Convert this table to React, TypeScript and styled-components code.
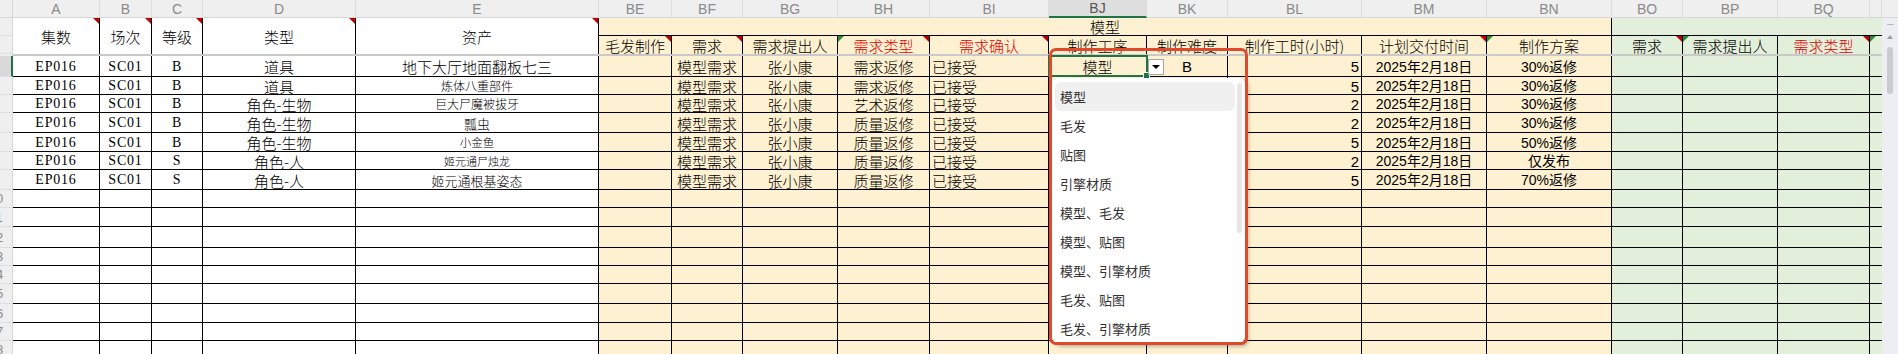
import React from 'react'
import styled, { createGlobalStyle, css } from 'styled-components'

type Zone = 'white' | 'gold' | 'green'
type Align = 'center' | 'left' | 'right'
type Face = 'cjk' | 'code' | 'sans'
type Mark = 'red' | 'green' | 'both' | undefined

interface Col {
  key: string
  width: number
  zone: Zone
  align: Align
  face: Face
}

const COLS: Col[] = [
  { key: 'A', width: 87, zone: 'white', align: 'center', face: 'code' },
  { key: 'B', width: 52, zone: 'white', align: 'center', face: 'code' },
  { key: 'C', width: 51, zone: 'white', align: 'center', face: 'code' },
  { key: 'D', width: 153, zone: 'white', align: 'center', face: 'cjk' },
  { key: 'E', width: 243, zone: 'white', align: 'center', face: 'cjk' },
  { key: 'BE', width: 73, zone: 'gold', align: 'center', face: 'cjk' },
  { key: 'BF', width: 71, zone: 'gold', align: 'center', face: 'cjk' },
  { key: 'BG', width: 95, zone: 'gold', align: 'center', face: 'cjk' },
  { key: 'BH', width: 92, zone: 'gold', align: 'center', face: 'cjk' },
  { key: 'BI', width: 119, zone: 'gold', align: 'left', face: 'cjk' },
  { key: 'BJ', width: 98, zone: 'gold', align: 'center', face: 'cjk' },
  { key: 'BK', width: 81, zone: 'gold', align: 'center', face: 'sans' },
  { key: 'BL', width: 134, zone: 'gold', align: 'right', face: 'sans' },
  { key: 'BM', width: 125, zone: 'gold', align: 'center', face: 'sans' },
  { key: 'BN', width: 125, zone: 'gold', align: 'center', face: 'sans' },
  { key: 'BO', width: 71, zone: 'green', align: 'center', face: 'cjk' },
  { key: 'BP', width: 95, zone: 'green', align: 'center', face: 'cjk' },
  { key: 'BQ', width: 92, zone: 'green', align: 'center', face: 'cjk' },
  { key: '', width: 12, zone: 'green', align: 'center', face: 'cjk' },
]

// header texts of row 2 for the gold + green block (BE .. BR)
const SUB_HEADERS: { text: string; red?: boolean; mark?: Mark }[] = [
  { text: '毛发制作', mark: 'red' },
  { text: '需求', mark: 'red' },
  { text: '需求提出人' },
  { text: '需求类型', red: true, mark: 'both' },
  { text: '需求确认', red: true, mark: 'red' },
  { text: '制作工序' },
  { text: '制作难度' },
  { text: '制作工时(小时)' },
  { text: '计划交付时间', mark: 'red' },
  { text: '制作方案', mark: 'green' },
  { text: '需求', mark: 'red' },
  { text: '需求提出人', mark: 'green' },
  { text: '需求类型', red: true, mark: 'red' },
  { text: '', mark: 'green' },
]

const MAIN_HEADERS = ['集数', '场次', '等级', '类型', '资产']

interface RowData {
  [key: string]: string | number | undefined
}

const DATA: RowData[] = [
  { A: 'EP016', B: 'SC01', C: 'B', D: '道具', E: '地下大厅地面翻板七三', size: 15, BF: '模型需求', BG: '张小康', BH: '需求返修', BI: '已接受', BJ: '模型', BK: 'B', BL: 5, BM: '2025年2月18日', BN: '30%返修' },
  { A: 'EP016', B: 'SC01', C: 'B', D: '道具', E: '炼体八重部件', size: 12, BF: '模型需求', BG: '张小康', BH: '需求返修', BI: '已接受', BL: 5, BM: '2025年2月18日', BN: '30%返修' },
  { A: 'EP016', B: 'SC01', C: 'B', D: '角色-生物', E: '巨大尸魔被拔牙', size: 12, BF: '模型需求', BG: '张小康', BH: '艺术返修', BI: '已接受', BL: 2, BM: '2025年2月18日', BN: '30%返修' },
  { A: 'EP016', B: 'SC01', C: 'B', D: '角色-生物', E: '瓢虫', size: 13, BF: '模型需求', BG: '张小康', BH: '质量返修', BI: '已接受', BL: 2, BM: '2025年2月18日', BN: '30%返修' },
  { A: 'EP016', B: 'SC01', C: 'B', D: '角色-生物', E: '小金鱼', size: 11.5, BF: '模型需求', BG: '张小康', BH: '质量返修', BI: '已接受', BL: 5, BM: '2025年2月18日', BN: '50%返修' },
  { A: 'EP016', B: 'SC01', C: 'S', D: '角色-人', E: '姬元通尸烛龙', size: 11, BF: '模型需求', BG: '张小康', BH: '质量返修', BI: '已接受', BL: 2, BM: '2025年2月18日', BN: '仅发布' },
  { A: 'EP016', B: 'SC01', C: 'S', D: '角色-人', E: '姬元通根基姿态', size: 13, BF: '模型需求', BG: '张小康', BH: '质量返修', BI: '已接受', BL: 5, BM: '2025年2月18日', BN: '70%返修' },
]

// screenshot rows are not all the same height
const ROW_HEIGHTS = [21, 18, 18, 20, 19, 18, 20, 18, 19, 21, 18, 18, 20, 19, 18, 18]

const OPTIONS = ['模型', '毛发', '贴图', '引擎材质', '模型、毛发', '模型、贴图', '模型、引擎材质', '毛发、贴图', '毛发、引擎材质']

const zoneBg: Record<Zone, string> = {
  white: '#ffffff',
  gold: '#fef1d1',
  green: '#e2efda',
}

const faces: Record<Face, string> = {
  cjk: `'Noto Sans CJK SC', sans-serif`,
  code: `'Liberation Serif', 'Noto Sans CJK SC', serif`,
  sans: `'Liberation Sans', 'Noto Sans CJK SC', sans-serif`,
}

const GREEN = '#217346'

const GlobalStyle = createGlobalStyle`
  html, body {
    margin: 0;
    padding: 0;
    background: #fff;
  }
  body {
    font-family: 'Noto Sans CJK SC', sans-serif;
    color: #000;
  }
`

const Window = styled.div`
  display: flex;
  width: 1898px;
  height: 354px;
  overflow: hidden;
`

const Sheet = styled.div`
  position: relative;
  flex: 1;
  display: grid;
  grid-template-columns: 13px ${COLS.map(c => c.width + 'px').join(' ')};
  grid-template-rows: 18px 18px 18px 2px ${ROW_HEIGHTS.map(h => h + 'px').join(' ')};
  overflow: hidden;
`

const markCss = css<{ $mark?: Mark }>`
  ${p => (p.$mark === 'red' || p.$mark === 'both') && css`
    &::after {
      content: '';
      position: absolute;
      top: 0;
      right: 0;
      border-style: solid;
      border-width: 0 6px 6px 0;
      border-color: transparent #c00000 transparent transparent;
    }
  `}
  ${p => (p.$mark === 'green' || p.$mark === 'both') && css`
    &::before {
      content: '';
      position: absolute;
      top: 0;
      left: 0;
      border-style: solid;
      border-width: 6px 6px 0 0;
      border-color: #2e8b2e transparent transparent transparent;
    }
  `}
`

const Corner = styled.div`
  background: #efefef;
  border-right: 1px solid #d6d6d6;
  border-bottom: 1px solid #d6d6d6;
`

const ColHead = styled.div<{ $active?: boolean }>`
  display: flex;
  align-items: center;
  justify-content: center;
  background: ${p => (p.$active ? '#dedede' : '#efefef')};
  border-right: 1px solid #dcdcdc;
  border-bottom: ${p => (p.$active ? `2px solid ${GREEN}` : '1px solid #d6d6d6')};
  color: ${p => (p.$active ? '#555' : '#8a8a8a')};
  font-family: 'Liberation Sans', sans-serif;
  font-size: 14px;
  box-sizing: border-box;
  overflow: hidden;
`

const RowHead = styled.div<{ $active?: boolean; $r?: string }>`
  ${p => p.$r && `grid-row: ${p.$r}; grid-column: 1;`}
  display: flex;
  align-items: center;
  overflow: hidden;
  background: ${p => (p.$active ? '#d9d9d9' : '#efefef')};
  border-right: ${p => (p.$active ? `2px solid ${GREEN}` : '1px solid #d6d6d6')};
  border-bottom: 1px solid #dedede;
  box-sizing: border-box;
`

// the row header is scrolled half out of view, only the last digit peeks in
const RowLabel = styled.span`
  flex: none;
  width: 34px;
  margin-left: -21px;
  text-align: center;
  font-family: 'Liberation Sans', sans-serif;
  font-size: 13px;
  color: #8a8a8a;
`

const MainHead = styled.div<{ $c: number; $mark?: Mark }>`
  position: relative;
  grid-column: ${p => p.$c};
  grid-row: 2 / 4;
  display: flex;
  align-items: center;
  justify-content: center;
  background: #fff;
  border-right: 1px solid #000;
  font-size: 15px;
  font-weight: 300;
  ${markCss}
`

const BandHead = styled.div<{ $c: string; $zone: Zone; $edge?: boolean }>`
  grid-column: ${p => p.$c};
  grid-row: 2;
  display: flex;
  align-items: center;
  justify-content: center;
  background: ${p => zoneBg[p.$zone]};
  border-right: ${p => (p.$edge ? '1px solid #000' : 'none')};
  border-bottom: 1px solid #000;
  font-size: 15px;
  font-weight: 300;
`

const SubHead = styled.div<{ $c: number; $zone: Zone; $red?: boolean; $last?: boolean; $mark?: Mark }>`
  position: relative;
  grid-column: ${p => p.$c};
  grid-row: 3;
  display: flex;
  align-items: center;
  justify-content: center;
  white-space: nowrap;
  overflow: hidden;
  background: ${p => zoneBg[p.$zone]};
  border-right: ${p => (p.$last ? 'none' : '1px solid #000')};
  color: ${p => (p.$red ? '#e00000' : '#000')};
  font-size: 15px;
  font-weight: 300;
  ${markCss}
`

const Freeze = styled.div`
  grid-row: 4;
  grid-column: 2 / -1;
  background: #c9c9c9;
`

const FreezeHead = styled.div`
  grid-row: 4;
  grid-column: 1;
  background: #efefef;
  border-right: 1px solid #d6d6d6;
`

const Cell = styled.div<{ $zone: Zone; $align: Align; $face: Face; $size: number; $last?: boolean }>`
  display: flex;
  align-items: center;
  justify-content: ${p => (p.$align === 'center' ? 'center' : p.$align === 'left' ? 'flex-start' : 'flex-end')};
  padding: 1px 2px 0;
  white-space: nowrap;
  overflow: hidden;
  background: ${p => zoneBg[p.$zone]};
  border-right: ${p => (p.$last ? 'none' : '1px solid #000')};
  border-bottom: 1px solid #000;
  box-sizing: border-box;
  font-family: ${p => faces[p.$face]};
  font-size: ${p => p.$size}px;
  font-weight: ${p => (p.$face === 'cjk' ? 300 : 400)};
  letter-spacing: ${p => (p.$face === 'code' ? '0.8px' : 'normal')};
  line-height: 1;
`

const Selection = styled.div`
  position: absolute;
  left: 1048px;
  top: 55px;
  width: 100px;
  height: 22px;
  border: 2px solid ${GREEN};
  box-sizing: border-box;
`

const Handle = styled.div`
  position: absolute;
  right: -4px;
  bottom: -4px;
  width: 5px;
  height: 5px;
  background: ${GREEN};
  border: 1px solid #fff;
`

const DropButton = styled.div`
  position: absolute;
  left: 1148px;
  top: 59px;
  width: 14px;
  height: 14px;
  display: flex;
  align-items: center;
  justify-content: center;
  background: #fff;
  border: 1px solid #a6a6a6;

  &::after {
    content: '';
    border-style: solid;
    border-width: 4px 4px 0 4px;
    border-color: #000 transparent transparent transparent;
  }
`

const DropPanel = styled.div`
  position: absolute;
  left: 1052px;
  top: 78px;
  width: 193px;
  height: 265px;
  display: flex;
  flex-direction: column;
  padding: 4px 0 0 3px;
  box-sizing: border-box;
  background: #fff;
  border-radius: 6px;
  box-shadow: 3px 3px 4px rgba(0, 0, 0, 0.35);
  overflow: hidden;
`

const Option = styled.div<{ $active?: boolean }>`
  flex: none;
  width: 180px;
  height: 29px;
  display: flex;
  align-items: center;
  padding-left: 5px;
  box-sizing: border-box;
  border-radius: 6px;
  background: ${p => (p.$active ? '#f0f0f0' : 'transparent')};
  color: #333;
  font-size: 13px;
`

const PanelThumb = styled.div`
  position: absolute;
  right: 3px;
  top: 5px;
  width: 5px;
  height: 150px;
  border-radius: 3px;
  background: #e6e6e6;
`

const Annotation = styled.div`
  position: absolute;
  left: 1049px;
  top: 48px;
  width: 199px;
  height: 297px;
  border: 3px solid #e04a2c;
  border-radius: 7px;
  box-sizing: border-box;
`

const ScrollBar = styled.div`
  width: 16px;
  display: flex;
  flex-direction: column;
`

const ScrollCap = styled.div`
  height: 18px;
  background: #efefef;
  border-bottom: 1px solid #d6d6d6;
  box-sizing: border-box;
`

const ScrollTrack = styled.div`
  flex: 1;
  display: flex;
  flex-direction: column;
  align-items: center;
  background: #eceef3;
  padding-top: 6px;
  gap: 6px;
`

const Dash = styled.div`
  width: 7px;
  height: 1px;
  background: #b5b7bd;
`

const UpArrow = styled.div`
  border-style: solid;
  border-width: 0 3px 4px 3px;
  border-color: transparent transparent #9a9ca2 transparent;
  margin-top: 4px;
`

const Thumb = styled.div`
  width: 6px;
  height: 47px;
  margin-top: 2px;
  border-radius: 3px;
  background: #c9cbd0;
`

export default function App() {
  const goldStart = 2 + 5 + 1 // grid column of BE (1 = row head)
  return (
    <>
      <GlobalStyle />
      <Window>
        <Sheet>
          {/* column letters */}
          <Corner />
          {COLS.map(c => (
            <ColHead key={'h' + c.key + c.width} $active={c.key === 'BJ'}>
              {c.key}
            </ColHead>
          ))}

          {/* header block, rows 1-2 (their numbers are scrolled out of view) */}
          <RowHead $r="2" />
          <RowHead $r="3" />
          {MAIN_HEADERS.map((t, i) => (
            <MainHead key={t} $c={i + 2} $mark="red">
              {t}
            </MainHead>
          ))}
          <BandHead $c={`${goldStart - 1} / ${goldStart + 9}`} $zone="gold" $edge>
            模型
          </BandHead>
          <BandHead $c={`${goldStart + 9} / -1`} $zone="green" />
          {SUB_HEADERS.map((h, i) => (
            <SubHead
              key={'s' + i}
              $c={goldStart - 1 + i}
              $zone={COLS[5 + i].zone}
              $red={h.red}
              $mark={h.mark}
              $last={i === SUB_HEADERS.length - 1}
            >
              {h.text}
            </SubHead>
          ))}
          <FreezeHead />
          <Freeze />

          {/* data rows */}
          {ROW_HEIGHTS.map((_, r) => {
            const row = DATA[r]
            const num = r + 3
            return (
              <React.Fragment key={'r' + r}>
                <RowHead $active={r === 0}>
                  {num >= 10 && <RowLabel>{num}</RowLabel>}
                </RowHead>
                {COLS.map((c, ci) => {
                  const hidden = r > 0 && (c.key === 'BJ' || c.key === 'BK')
                  const value = row && c.key && !hidden ? row[c.key] : ''
                  const size = c.key === 'E' && row ? Number(row.size) : c.face === 'code' ? 14 : c.key === 'BM' || c.key === 'BN' ? 14 : 15
                  return (
                    <Cell
                      key={'c' + r + '-' + ci}
                      $zone={c.zone}
                      $align={c.align}
                      $face={c.face}
                      $size={size}
                      $last={ci === COLS.length - 1}
                    >
                      {value}
                    </Cell>
                  )
                })}
              </React.Fragment>
            )
          })}

          {/* active cell + data validation list */}
          <Selection>
            <Handle />
          </Selection>
          <DropButton />
          <DropPanel>
            {OPTIONS.map((o, i) => (
              <Option key={o} $active={i === 0}>
                {o}
              </Option>
            ))}
            <PanelThumb />
          </DropPanel>
          <Annotation />
        </Sheet>

        <ScrollBar>
          <ScrollCap />
          <ScrollTrack>
            <Dash />
            <UpArrow />
            <Thumb />
          </ScrollTrack>
        </ScrollBar>
      </Window>
    </>
  )
}
